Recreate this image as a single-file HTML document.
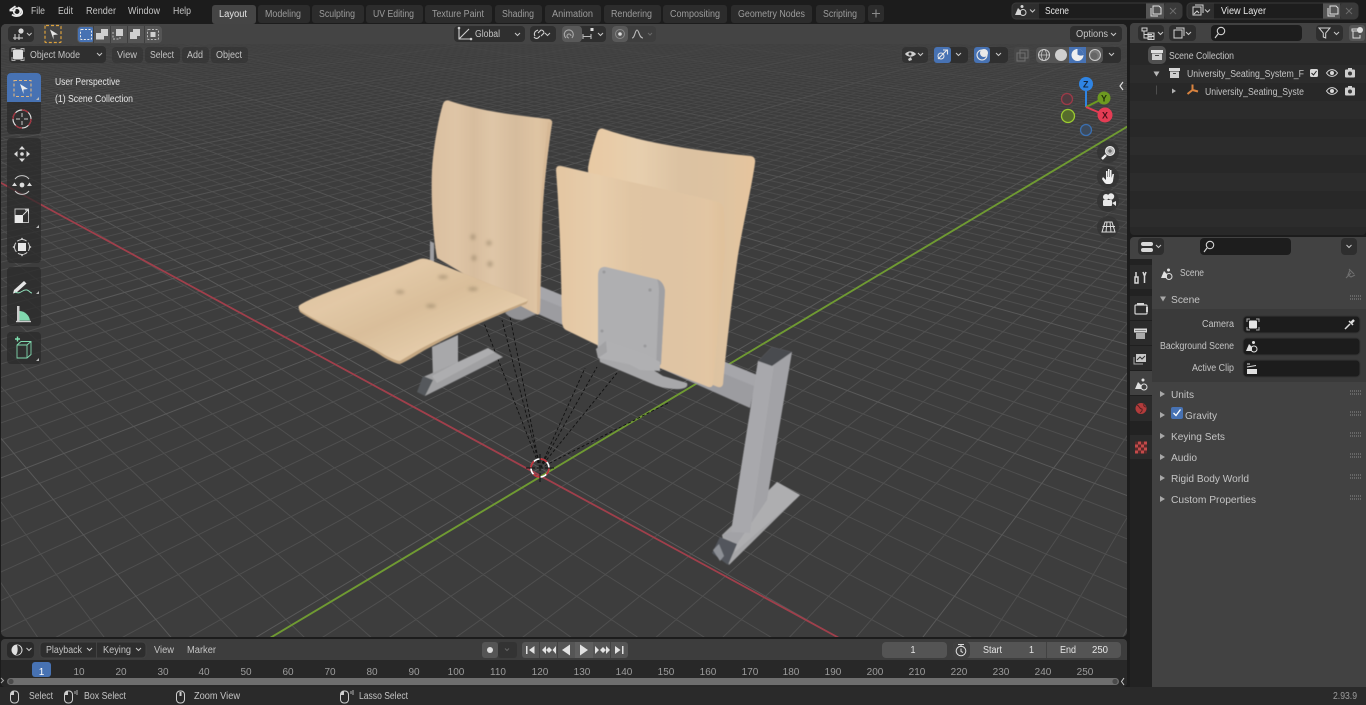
<!DOCTYPE html>
<html><head><meta charset="utf-8"><title>Blender</title>
<style>
html,body{margin:0;padding:0;background:#1d1d1d;width:1366px;height:705px;overflow:hidden}
svg{display:block;overflow:hidden;filter:blur(.28px)}
text{font-family:"Liberation Sans",sans-serif;font-size:10px;fill:#c4c4c4}
.w{fill:#e6e6e6}.d{fill:#9c9c9c}.b{fill:#2a2a2a}
.i{fill:none;stroke:#d8d8d8;stroke-width:1.2}
.f{fill:#d8d8d8}
.a{fill:none;stroke:#c8c8c8;stroke-width:1}
</style></head><body>
<svg xmlns="http://www.w3.org/2000/svg" width="1366" height="705" viewBox="0 0 1366 705" lang="en">
<defs>
<clipPath id="vp"><rect x="1" y="24" width="1126" height="613" rx="5"/></clipPath>
<linearGradient id="fade" x1="0" y1="0" x2="0" y2="1"><stop offset="0" stop-color="#3d3d3d" stop-opacity=".82"/><stop offset=".3" stop-color="#3d3d3d" stop-opacity=".4"/><stop offset="1" stop-color="#3d3d3d" stop-opacity="0"/></linearGradient>
<linearGradient id="wa" x1="0" y1="0" x2="1" y2="0"><stop offset="0" stop-color="#dabfa0"/><stop offset=".2" stop-color="#dfc5a6"/><stop offset=".35" stop-color="#d7bd9e"/><stop offset=".5" stop-color="#dfc6a7"/><stop offset=".7" stop-color="#d6bc9d"/><stop offset=".88" stop-color="#dfc4a3"/><stop offset="1" stop-color="#d8bb98"/></linearGradient>
<linearGradient id="wb" x1="0" y1="0" x2="1" y2="0"><stop offset="0" stop-color="#e3c6a2"/><stop offset=".25" stop-color="#e7cdab"/><stop offset=".45" stop-color="#e0c5a3"/><stop offset=".7" stop-color="#dfc4a3"/><stop offset=".9" stop-color="#e2c6a3"/><stop offset="1" stop-color="#e0c19b"/></linearGradient>
<linearGradient id="wc" x1="0" y1="0" x2="1" y2="0"><stop offset="0" stop-color="#e8c9a3"/><stop offset=".3" stop-color="#e7cfae"/><stop offset=".55" stop-color="#dcc2a2"/><stop offset=".8" stop-color="#dec3a1"/><stop offset="1" stop-color="#e6c59e"/></linearGradient>
<linearGradient id="ws" x1="0" y1="0" x2="1" y2="1"><stop offset="0" stop-color="#dcc09c"/><stop offset=".3" stop-color="#e2c8a6"/><stop offset=".5" stop-color="#d9be9a"/><stop offset=".7" stop-color="#e3caa8"/><stop offset="1" stop-color="#dcbf9a"/></linearGradient>
<filter id="s" x="-5%" y="-5%" width="110%" height="110%"><feGaussianBlur stdDeviation=".5"/></filter>
<filter id="sp" x="-50%" y="-50%" width="200%" height="200%"><feGaussianBlur stdDeviation="1.7"/></filter>
</defs>

<!-- base -->
<rect width="1366" height="705" fill="#1c1c1c"/>

<!-- 3D viewport -->
<g clip-path="url(#vp)">
<rect x="0" y="24" width="1128" height="614" fill="#3d3d3d"/>
<g id="minor" stroke="#4f4f4f" stroke-width="1" fill="none"></g>
<g id="major" stroke="#595959" stroke-width="1" fill="none"></g>
<rect x="0" y="24" width="1128" height="260" fill="url(#fade)"/>
<path d="M-20,171.500L840,638.500" stroke="#a03f4b" stroke-width="1.800" fill="none"/>
<path d="M270,638L1130,125" stroke="#6f9a32" stroke-width="1.900" fill="none"/>

<g stroke="#111" stroke-width=".9" stroke-dasharray="3 2.200" fill="none">
<path d="M540,468L484,323M540,468L502,320M540,468L510,317M540,468L585,368M540,468L597,367M540,468L617,373M540,468L670,402"/>
</g>

<g filter="url(#s)">
<!-- left leg -->
<path d="M432,347L458,335V363L433,378Z" fill="#a8a8aa"/>
<path d="M458,362L488,348L503,357L425,396L423,377Z" fill="#a0a0a2"/>
<path d="M458,362L488,348L495,352L437,383L432,376Z" fill="#adadaf"/>
<path d="M423,376L433,380L425,396L417,392Z" fill="#55585c"/>
<path d="M430,241L434,243V262H430Z" fill="#9e9ea2"/>
<!-- beam -->
<path d="M520,278L757,375L750,408L520,306Z" fill="#9c9ca0"/>
<path d="M520,278L757,375L754,386L520,290Z" fill="#a6a6aa"/>
<path d="M505,313Q512,320 522,320L536,314L520,303Z" fill="#929295"/>
<!-- left back -->
<path d="M443,104Q445,99 450,101C480,111 520,116 549,119Q553,120 552,124C548,150 543,190 542,225L540,311Q539,316 536,314L500,295L437,258C432,230 431,190 432,170C433,150 438,120 443,104Z" fill="url(#wa)"/>
<path d="M552,122C548,150 543,190 542,225L540,311Q539,316 537,314C537,260 540,190 548,122Z" fill="#d6b895"/>
<!-- left seat -->
<path d="M299,306C310,296 380,275 420,259Q425,258 430,260L527,299Q529,301 526,304C490,318 440,340 415,356Q405,362 400,364Q396,364 385,358C360,341 320,326 300,312Q298,308 299,306Z" fill="#c3a681"/>
<path d="M299,306C310,296 380,275 420,259Q425,258 430,260L527,299Q529,301 525,302C490,316 440,337 415,352Q405,358 400,361Q396,361 385,355C360,339 320,324 300,310Q298,308 299,306Z" fill="url(#ws)"/>
<g filter="url(#sp)" fill="#8d7a5f" opacity=".5">
<ellipse cx="473" cy="237" rx="2.600" ry="3"/><ellipse cx="489" cy="243" rx="2.800" ry="2.600"/><ellipse cx="474" cy="258" rx="2.600" ry="3"/><ellipse cx="490" cy="264" rx="2.800" ry="3"/>
<ellipse cx="400" cy="292" rx="4.500" ry="2"/><ellipse cx="443" cy="277" rx="5" ry="2"/><ellipse cx="473" cy="289" rx="5" ry="2"/><ellipse cx="431" cy="306" rx="5" ry="2"/>
</g>
<!-- right rear back -->
<path d="M597,133Q599,127 604,129C650,145 710,152 751,156Q756,157 755,163C752,185 745,215 738,255C733,290 726,350 723,384Q722,388 718,387L700,380L590,220L588,168C590,155 594,143 597,133Z" fill="url(#wc)"/>
<!-- lower bracket -->
<path d="M597,343L640,362L663,376L687,383Q689,388 680,389Q665,390 650,383L600,362Z" fill="#a8a8aa"/>
<!-- right front seat -->
<path d="M556,170Q556,165 561,166C620,180 670,190 718,202Q724,204 724,212L725,250C722,290 716,350 713,384Q712,389 706,386L660,368L597,345L566,330Q562,328 562,320C561,270 560,220 556,170Z" fill="url(#wb)"/>
<!-- plate -->
<path d="M598,276Q598,266 606,267L656,279Q664,282 665,291L661,364L656,370L598,358Z" fill="#afafb1"/>
<path d="M657,279Q664,282 665,291L661,364L656,370L659,292Q659,284 657,279Z" fill="#a0a0a3"/>
<path d="M596,349L606,341L647,355L660,362L660,371L640,370L625,362L598,358Z" fill="#b0b0b2"/>
<path d="M596,349L606,341L607,352L598,358Z" fill="#a2a2a4"/>
<g fill="#98989a"><circle cx="604" cy="272" r="1.500"/><circle cx="650" cy="290" r="1.600"/><circle cx="602" cy="331" r="1.500"/><circle cx="645" cy="346" r="1.500"/></g>
<!-- right leg -->
<path d="M777,482L800,495L729,565L722,535Z" fill="#a6a6a8"/>
<path d="M777,482L800,495L796,499L735,552L730,535Z" fill="#aeaeb0"/>
<path d="M758,361L772,347L792,352L767,500L737,544L722,535L731,532Z" fill="#a2a2a6"/>
<path d="M758,361L774,365L750,533L731,532Z" fill="#a8a8ac"/>
<path d="M758,361L772,347L792,352L772,366Z" fill="#484b50"/>
<path d="M720,537L737,544L728,565L712,553Z" fill="#53575d"/>
<path d="M713,550L719,544L724,556L720,561Z" fill="#8d9096"/>
</g>

<!-- 3D cursor -->
<g fill="none">
<circle cx="540" cy="468" r="9" stroke="#fff" stroke-width="1.600"/>
<circle cx="540" cy="468" r="9" stroke="#c0303a" stroke-width="1.700" stroke-dasharray="7.100 7.100"/>
<path d="M540,454V463M540,473V482M526,468H535M545,468H554" stroke="#111" stroke-width="1"/>
<path d="M537,468H543M540,465V471" stroke="#222" stroke-width="1.400"/>
</g>

<!-- tool header strip -->
<rect x="0" y="24" width="1128" height="20" fill="#454545" opacity=".96"/>
</g>

<!-- viewport header widgets -->
<g fill="#2f2f2f">
<rect x="8" y="26" width="26" height="16" rx="4"/>
<rect x="77" y="26" width="85" height="17" rx="4" fill="#555"/>
<rect x="454" y="26" width="71" height="16" rx="4"/>
<rect x="530" y="26" width="26" height="16" rx="4"/>
<rect x="578" y="26" width="28" height="16" rx="4"/>
<rect x="562" y="26" width="20" height="16" rx="4" fill="#595959"/>
<rect x="612" y="26" width="44" height="16" rx="4" fill="#3e3e3e"/>
<rect x="612" y="26" width="16" height="16" rx="4" fill="#595959"/>
<rect x="1070" y="26" width="52" height="16" rx="4"/>
<rect x="9" y="46" width="97" height="17" rx="4"/>
<rect x="112" y="47" width="31" height="16" rx="4" opacity=".55"/>
<rect x="145" y="47" width="35" height="16" rx="4" opacity=".55"/>
<rect x="182" y="47" width="27" height="16" rx="4" opacity=".55"/>
<rect x="211" y="47" width="37" height="16" rx="4" opacity=".55"/>
<rect x="902" y="47" width="26" height="16" rx="4" opacity=".8"/>
<rect x="934" y="47" width="34" height="16" rx="4"/>
<rect x="974" y="47" width="34" height="16" rx="4"/>
<rect x="1014" y="47" width="16" height="16" rx="3" fill="#474747"/>
<rect x="1036" y="47" width="85" height="16" rx="4"/>
<rect x="1036" y="47" width="67" height="16" rx="4" fill="#555"/>
</g>
<rect x="934" y="47" width="17" height="16" rx="3" fill="#4772b3"/>
<rect x="974" y="47" width="16" height="16" rx="3" fill="#4772b3"/>
<rect x="1069" y="47" width="17" height="16" fill="#4772b3"/>
<rect x="78" y="27" width="16" height="15" rx="3" fill="#4772b3"/>
<path d="M93.500,26V43M110.500,26V43M127.500,26V43M144.500,26V43" fill="none" stroke="#3f3f3f"/>

<!-- header icons -->
<g class="i">
<path d="M13,38H23M15,34V40M19,34V40" stroke-width="1"/>
<circle class="f" cx="21" cy="31" r="2.600" stroke="none"/>
<path d="M27,33l2.300,2.300 2.300,-2.300" class="a"/>
<rect x="45" y="25.500" width="16" height="17" rx="1" stroke="#dca13c" stroke-dasharray="3 2"/>
</g>
<path d="M50,29.500L58,34.500 53.500,35 53.500,39.500Z" fill="#e6e6e6"/>
<g>
<rect x="80.500" y="29.500" width="11" height="10" rx="1" fill="none" stroke="#eaeaea" stroke-dasharray="2 1.500"/>
<path d="M96,39.500V33h5v-4h7v7h-4v3.500Z" fill="#cfcfcf"/>
<path d="M113,32v7h7v-3" fill="none" stroke="#bbb" stroke-dasharray="2 1.500"/><path d="M116,29h7v7h-7Z" fill="#cfcfcf"/>
<path d="M130,32h7v7h-7ZM133,29h7v7h-3v-4h-4Z" fill="#cfcfcf"/>
<rect x="147.500" y="29.500" width="11" height="10" rx="1" fill="none" stroke="#bbb" stroke-dasharray="2 1.500"/><rect x="150.500" y="32" width="5" height="5" fill="#cfcfcf"/>
</g>
<path d="M459,28V39H471M459,39L469,29" fill="none" stroke="#cfcfcf" stroke-width="1.100"/><circle cx="459" cy="28" r="1.300" fill="#cfcfcf"/><circle cx="471" cy="39" r="1.300" fill="#cfcfcf"/>
<path class="a" d="M515,33l2.500,2.500 2.500,-2.500M545,33l2.500,2.500 2.500,-2.500M598,33l2.500,2.500 2.500,-2.500M1111,33l2.500,2.500 2.500,-2.500M97,53l2.500,2.500 2.500,-2.500M918,53l2.500,2.500 2.500,-2.500M956,53l2.500,2.500 2.500,-2.500M996,53l2.500,2.500 2.500,-2.500M1109,53l2.500,2.500 2.500,-2.500"/>
<path d="M648,33l2,2 2,-2" fill="none" stroke="#6a6a6a"/>
<g fill="none" stroke="#d0d0d0" stroke-width="1.100">
<path d="M535,36a3.500,3.500 0 0 1 1,-5l2,-1M540,36l-2,2a3,3 0 0 1 -4,-1M538,33l3,-3a3,3 0 0 1 3,3l-3,3"/>
<path d="M566,38a4.500,4.500 0 1 1 7,-2l-1,2M569,38a2,2 0 1 1 2,-2" stroke="#aaa"/>
<path d="M583,34v5M591,34v5M583,36.500h8" stroke="#bbb"/>
<path d="M632,38c3,0 3,-8 5,-8s2,8 6,8" stroke="#bbb"/>
</g>
<rect x="590.500" y="28" width="3" height="3" fill="#ddd"/>
<circle cx="620" cy="34" r="4.500" fill="none" stroke="#888"/><circle cx="620" cy="34" r="1.800" fill="#ddd"/>
<g>
<rect x="13" y="49.500" width="10" height="10" rx="1.500" fill="#ddd"/><path d="M12,52V48.500H15.500M24,52V48.500H20.500M12,57V60.500H15.500M24,57V60.500H20.500" fill="none" stroke="#aaa"/>
</g>
<!-- visibility icons -->
<path d="M905,54c2,-3 8,-4 11,0c-2,3 -8,4 -11,0Z" fill="#d0d0d0"/><path d="M908,59l3,-2 1,3-3,1Z" fill="#d0d0d0"/><circle cx="910" cy="54" r="1.500" fill="#333"/>
<path d="M938,59L947,50M943,50h4.500v4.500" fill="none" stroke="#e8e8e8" stroke-width="1.100"/><circle cx="941" cy="56" r="3" fill="none" stroke="#e8e8e8"/>
<circle cx="982" cy="55" r="5" fill="none" stroke="#e8e8e8" stroke-width="1.100"/><circle cx="984" cy="53" r="4" fill="#e8e8e8"/>
<rect x="1017" y="53" width="8" height="8" fill="none" stroke="#717171"/><rect x="1020" y="50" width="8" height="8" fill="none" stroke="#717171"/>
<circle cx="1044" cy="55" r="5.500" fill="none" stroke="#ccc"/><ellipse cx="1044" cy="55" rx="2.500" ry="5.500" fill="none" stroke="#ccc" stroke-width=".7"/><path d="M1038.500,55h11" stroke="#ccc" stroke-width=".7"/>
<circle cx="1061" cy="55" r="6" fill="#cfcfcf"/>
<circle cx="1077.500" cy="55" r="6" fill="#eee"/><path d="M1077.500,49a6,6 0 0 1 6,6a6,6 0 0 1 -6,-.5Z" fill="#4772b3"/><path d="M1072,55.500a6,6 0 0 1 5.500,-6.500v5.500Z" fill="#eee"/>
<circle cx="1095" cy="55" r="5.500" fill="#777" stroke="#ccc"/><circle cx="1094" cy="56" r="3.600" fill="#666"/>

<!-- viewport overlay text -->
<text class="w" x="55" y="85" textLength="65" lengthAdjust="spacingAndGlyphs">User Perspective</text>
<text class="w" x="55" y="102" textLength="78" lengthAdjust="spacingAndGlyphs">(1) Scene Collection</text>

<!-- toolbar -->
<g fill="#2a2a2a" fill-opacity=".72">
<rect x="7" y="73" width="34" height="61" rx="4"/>
<rect x="7" y="138" width="34" height="125" rx="4"/>
<rect x="7" y="267" width="34" height="59" rx="4"/>
<rect x="7" y="332" width="34" height="32" rx="4"/>
</g>
<path d="M7,77a4,4 0 0 1 4,-4h26a4,4 0 0 1 4,4v25h-34Z" fill="#4772b3"/>
<rect x="14" y="80.500" width="17" height="16" fill="none" stroke="#e0b680" stroke-dasharray="3 2" stroke-width="1.100"/>
<path d="M20,84L28,89 23.500,89.500V94Z" fill="#eee"/>
<circle cx="22" cy="119" r="9" fill="none" stroke="#ddd" stroke-width="1.200"/><circle cx="22" cy="119" r="9" fill="none" stroke="#a3303c" stroke-width="1.300" stroke-dasharray="7 7"/>
<path d="M22,113V117M22,121V125M16,119H20M24,119H28" stroke="#c8c8c8"/>
<g fill="#dcdcdc"><path d="M22,146l3,3.500h-6ZM22,162l3,-3.500h-6ZM14,154l3.500,-3v6ZM30,154l-3.500,-3v6Z"/><circle cx="22" cy="154" r="1.800"/></g>
<path d="M15,179a9,9 0 0 1 14,0M15,191a9,9 0 0 0 14,0" fill="none" stroke="#ccc" stroke-width="1"/><circle cx="22" cy="185" r="2.400" fill="#dcdcdc"/><path d="M12,186h5l-2.500,-3.500ZM27,186h5l-2.500,-3.500Z" fill="#dcdcdc"/>
<rect x="15" y="209" width="13.500" height="13.500" fill="none" stroke="#bbb"/><rect x="15" y="215" width="8" height="8" fill="#e8e8e8"/><path d="M23,215l5,-5M25,210h3.500v3.500" stroke="#e0e0e0" fill="none"/>
<circle cx="22" cy="247" r="7.500" fill="none" stroke="#ccc" stroke-dasharray="4 2"/><rect x="18" y="243" width="8" height="8" fill="#e8e8e8"/><path d="M12.500,247l2.500,-2v4ZM31.500,247l-2.500,-2v4ZM22,237.500l-2,2.500h4ZM22,256.500l-2,-2.500h4Z" fill="#ccc"/>
<path d="M14,290l10,-9 2.500,2.500 -10,9 -3.500,1Z" fill="#e6e6e6"/><path d="M15,292c6,3 7,-3 12,-2 3,1 3,3 5,3" fill="none" stroke="#8fdcb8" stroke-width="1"/>
<path d="M17,306h2.500v15H17Z" fill="#ccc"/><path d="M19.500,320.500V311a11,11 0 0 1 10.500,9.500Z" fill="#80d8ae"/><path d="M16,321.500H31" stroke="#ccc" stroke-width="1.400"/>
<path d="M17,345l4,-3.500h10v13l-4,3.500h-10ZM17,345h10v13M27,345l4,-3.500" fill="none" stroke="#80d8ae" stroke-width=".9"/><path d="M15,339h5M17.500,336.500v5" stroke="#80e0b0" stroke-width="1.400"/>
<path d="M39,100v-3l-3,3ZM39,228v-3l-3,3ZM39,294v-3l-3,3ZM39,361v-3l-3,3Z" fill="#bbb"/>

<!-- gizmo -->
<g>
<path d="M1086,107V91" stroke="#2f84e3" stroke-width="2"/>
<path d="M1086,107L1104,98" stroke="#6d9a20" stroke-width="2"/>
<path d="M1086,107L1105,115" stroke="#e43c54" stroke-width="2"/>
<circle cx="1067" cy="99" r="5.500" fill="#4e3c40" stroke="#9c3a48" stroke-width="1.300"/>
<circle cx="1068" cy="116" r="6.500" fill="#566b2c" stroke="#9ccc30" stroke-width="1.300"/>
<circle cx="1086" cy="130" r="5.500" fill="#3c4a5c" stroke="#3b6fb0" stroke-width="1.300"/>
<circle cx="1086" cy="84" r="7" fill="#2f84e3"/>
<circle cx="1104" cy="98" r="6.500" fill="#6d9a20"/>
<circle cx="1105" cy="115" r="7.500" fill="#e43c54"/>
<text x="1083" y="87.500" style="font-size:9px;fill:#12263e;font-weight:bold">Z</text>
<text x="1101" y="101.500" style="font-size:9px;fill:#20300a;font-weight:bold">Y</text>
<text x="1102" y="118.500" style="font-size:9px;fill:#4a0e18;font-weight:bold">X</text>
</g>
<g fill="#333" fill-opacity=".8"><circle cx="1108" cy="152" r="11"/><circle cx="1108" cy="177" r="11"/><circle cx="1108" cy="201" r="11"/><circle cx="1108" cy="227" r="11"/></g>
<path d="M1123,82l-3,4 3,4" fill="none" stroke="#ddd" stroke-width="1.200"/>
<circle cx="1110" cy="151" r="4.500" fill="#bbb" stroke="#eee"/><path d="M1106,155l-4,4" stroke="#eee" stroke-width="2.400"/><path d="M1108,151h4M1110,149v4" stroke="#555"/>
<path d="M1103,177l3,3v-9h1.500v6h.5v-8h1.500v8h.5v-7h1.500v8l1,-4h1.500l-1,7c-.5,2 -2,3 -4,3h-2c-2,0 -3,-2 -5,-5Z" fill="#f0f0f0"/>
<circle cx="1106" cy="197" r="3" fill="#e8e8e8"/><circle cx="1111" cy="196.500" r="3.200" fill="#e8e8e8"/><rect x="1103" y="200" width="9" height="6" rx="1" fill="#e8e8e8"/><path d="M1112,203l4,-2v5Z" fill="#e8e8e8"/>
<path d="M1105,222h7l3,10h-13ZM1102.500,226.500h12.500M1107,222l-1,10M1110,222l1,10" fill="none" stroke="#ddd"/>

<!-- top bar -->
<rect x="0" y="0" width="1366" height="23" fill="#1c1c1c"/>
<g fill="none" stroke="#ececec" stroke-width="1.700"><circle cx="17" cy="11.500" r="3.300"/><path d="M10,10l5.500,-3.800M9.500,10.500h6M12,14.500a6,4.600 0 0 0 10,-1 6,5 0 0 0 -4,-6"/></g>
<text x="31" y="14" textLength="14" lengthAdjust="spacingAndGlyphs">File</text>
<text x="58" y="14" textLength="15" lengthAdjust="spacingAndGlyphs">Edit</text>
<text x="86" y="14" textLength="30" lengthAdjust="spacingAndGlyphs">Render</text>
<text x="128" y="14" textLength="32" lengthAdjust="spacingAndGlyphs">Window</text>
<text x="173" y="14" textLength="18" lengthAdjust="spacingAndGlyphs">Help</text>
<g fill="#2c2c2c">
<rect x="258" y="5" width="52" height="18" rx="3"/><rect x="312" y="5" width="52" height="18" rx="3"/><rect x="366" y="5" width="57" height="18" rx="3"/><rect x="425" y="5" width="67" height="18" rx="3"/><rect x="495" y="5" width="47" height="18" rx="3"/><rect x="545" y="5" width="56" height="18" rx="3"/><rect x="604" y="5" width="57" height="18" rx="3"/><rect x="663" y="5" width="64" height="18" rx="3"/><rect x="731" y="5" width="81" height="18" rx="3"/><rect x="816" y="5" width="49" height="18" rx="3"/><rect x="868" y="5" width="16" height="17" rx="3"/>
</g>
<rect x="212" y="5" width="44" height="19" rx="3" fill="#454545"/>
<text class="w" x="219" y="17" textLength="28" lengthAdjust="spacingAndGlyphs">Layout</text>
<g>
<text class="d" x="265" y="17" textLength="36" lengthAdjust="spacingAndGlyphs">Modeling</text>
<text class="d" x="319" y="17" textLength="36" lengthAdjust="spacingAndGlyphs">Sculpting</text>
<text class="d" x="373" y="17" textLength="41" lengthAdjust="spacingAndGlyphs">UV Editing</text>
<text class="d" x="432" y="17" textLength="52" lengthAdjust="spacingAndGlyphs">Texture Paint</text>
<text class="d" x="502" y="17" textLength="32" lengthAdjust="spacingAndGlyphs">Shading</text>
<text class="d" x="552" y="17" textLength="41" lengthAdjust="spacingAndGlyphs">Animation</text>
<text class="d" x="611" y="17" textLength="41" lengthAdjust="spacingAndGlyphs">Rendering</text>
<text class="d" x="670" y="17" textLength="50" lengthAdjust="spacingAndGlyphs">Compositing</text>
<text class="d" x="738" y="17" textLength="67" lengthAdjust="spacingAndGlyphs">Geometry Nodes</text>
<text class="d" x="823" y="17" textLength="34" lengthAdjust="spacingAndGlyphs">Scripting</text>
</g>
<path d="M876,9.500v8M872,13.500h8" stroke="#8c8c8c" stroke-width="1.100"/>
<!-- scene selector -->
<rect x="1012" y="3" width="170" height="16" rx="4" fill="#2e2e2e" stroke="#3a3a3a"/>
<rect x="1039" y="3.500" width="107" height="15" fill="#1d1d1d"/>
<rect x="1146" y="3.500" width="18" height="15" fill="#545454"/><rect x="1164" y="3.500" width="18" height="15" rx="3" fill="#3a3a3a"/>
<rect x="1187" y="3" width="171" height="16" rx="4" fill="#2e2e2e" stroke="#3a3a3a"/>
<rect x="1214" y="3.500" width="109" height="15" fill="#1d1d1d"/>
<rect x="1323" y="3.500" width="17" height="15" fill="#545454"/><rect x="1340" y="3.500" width="18" height="15" rx="3" fill="#3a3a3a"/>
<text class="w" x="1045" y="14" textLength="24" lengthAdjust="spacingAndGlyphs">Scene</text>
<text class="w" x="1221" y="14" textLength="45" lengthAdjust="spacingAndGlyphs">View Layer</text>
<path d="M1015,15l3,-7 3,3v4Z" fill="#d4d4d4"/><circle cx="1023" cy="12.500" r="3" fill="none" stroke="#d4d4d4"/><circle cx="1022" cy="6.500" r="1.500" fill="#d4d4d4"/>
<path class="a" d="M1030,9.500l2.500,2.500 2.500,-2.500M1205,9.500l2.500,2.500 2.500,-2.500"/>
<path d="M1193,7h8v8h-8ZM1195,5h8v8" fill="none" stroke="#d4d4d4"/><path d="M1194,14l3,-3 2,2" fill="none" stroke="#d4d4d4"/>
<path d="M1151,8v8h7M1153,6h6l2,2v6h-8Z" fill="none" stroke="#e0e0e0"/><path d="M1328,8v8h7M1330,6h6l2,2v6h-8Z" fill="none" stroke="#e0e0e0"/>
<path d="M1170,8l6,6M1176,8l-6,6M1346,8l6,6M1352,8l-6,6" stroke="#6c6c6c"/>

<!-- header labels -->
<text x="475" y="37" textLength="25" lengthAdjust="spacingAndGlyphs">Global</text>
<text x="1076" y="37" textLength="32" lengthAdjust="spacingAndGlyphs">Options</text>
<text x="30" y="58" textLength="50" lengthAdjust="spacingAndGlyphs">Object Mode</text>
<text x="117" y="58" textLength="20" lengthAdjust="spacingAndGlyphs">View</text>
<text x="150" y="58" textLength="24" lengthAdjust="spacingAndGlyphs">Select</text>
<text x="187" y="58" textLength="16" lengthAdjust="spacingAndGlyphs">Add</text>
<text x="216" y="58" textLength="26" lengthAdjust="spacingAndGlyphs">Object</text>

<!-- outliner -->
<rect x="1130" y="23" width="236" height="212" rx="4" fill="#282828"/>
<path d="M1130,43V27a4,4 0 0 1 4,-4h232V43Z" fill="#424242"/>
<rect x="1130" y="65" width="236" height="18" fill="#2c2c2c"/>
<rect x="1130" y="101" width="236" height="18" fill="#2c2c2c"/><rect x="1130" y="137" width="236" height="18" fill="#2c2c2c"/><rect x="1130" y="173" width="236" height="18" fill="#2c2c2c"/><rect x="1130" y="209" width="236" height="18" fill="#2c2c2c"/>
<rect x="1138" y="25" width="26" height="16" rx="4" fill="#2e2e2e"/><rect x="1169" y="25" width="27" height="16" rx="4" fill="#2e2e2e"/><rect x="1211" y="25" width="91" height="16" rx="4" fill="#1d1d1d"/><rect x="1316" y="25" width="27" height="16" rx="4" fill="#2e2e2e"/><rect x="1349" y="25" width="16" height="16" rx="3" fill="#555"/>
<path d="M1142,28h5v3h-5ZM1144,31v7h8M1144,34.500h8M1148,33h6v3h-6ZM1148,36.500h6v3h-6Z" fill="none" stroke="#d4d4d4"/>
<path class="a" d="M1158,32l2.500,2.500 2.500,-2.500M1186,32l2.500,2.500 2.500,-2.500M1334,32l2.500,2.500 2.500,-2.500"/>
<path d="M1174,30h8v8h-8ZM1176,28h8v8" fill="none" stroke="#d4d4d4"/>
<circle cx="1221" cy="31" r="3.700" fill="none" stroke="#d4d4d4" stroke-width="1.100"/><path d="M1218,34l-3,4" stroke="#d4d4d4" stroke-width="1.100"/>
<path d="M1319,28h11l-4.300,5v5l-2.400,-1v-4Z" fill="none" stroke="#d4d4d4"/>
<path d="M1352,29h7v2h-7ZM1353,31v7h7v-3" fill="none" stroke="#ddd"/><circle cx="1360" cy="30" r="3" fill="#ddd"/>
<rect x="1148" y="46" width="18" height="18" rx="5" fill="#505050"/>
<rect x="1151" y="50" width="12" height="3" fill="#e0e0e0"/><path d="M1152,53.500h10v6.500h-10Z" fill="#d0d0d0"/><path d="M1155,55.500h4" stroke="#444"/>
<text x="1169" y="59" textLength="65" lengthAdjust="spacingAndGlyphs">Scene Collection</text>
<path d="M1153.500,71.500h6l-3,5Z" fill="#b8b8b8"/>
<rect x="1169" y="68" width="11" height="3" fill="#d8d8d8"/><path d="M1170,71.500h9v6.500h-9Z" fill="#cfcfcf"/><path d="M1173,73.500h3" stroke="#444"/>
<text x="1187" y="77" textLength="117" lengthAdjust="spacingAndGlyphs">University_Seating_System_F</text>
<rect x="1310" y="69" width="8" height="8" rx="1.500" fill="#d8d8d8"/><path d="M1311.500,73l2,2 3,-4" fill="none" stroke="#222"/>
<path d="M1326.500,73c3,-4.500 8,-4.500 11,0c-3,4.500 -8,4.500 -11,0Z" fill="none" stroke="#d8d8d8"/><circle cx="1332" cy="73" r="2" fill="#d8d8d8"/>
<rect x="1345" y="69.500" width="10" height="8" rx="1" fill="#cfcfcf"/><rect x="1348" y="68" width="4" height="2" fill="#cfcfcf"/><circle cx="1350" cy="73.500" r="2" fill="#3a3a3a"/>
<path d="M1156.500,85.500v9" stroke="#4d4d4d"/>
<path d="M1172,88.500v5l4,-2.500Z" fill="#b0b0b0"/>
<path d="M1192.500,84.500v6M1192.500,90l5.500,1.500M1192.500,90l-5,4" stroke="#d9833f" stroke-width="2" fill="none"/>
<text x="1205" y="95" textLength="99" lengthAdjust="spacingAndGlyphs">University_Seating_Syste</text>
<path d="M1326.500,91c3,-4.500 8,-4.500 11,0c-3,4.500 -8,4.500 -11,0Z" fill="none" stroke="#d8d8d8"/><circle cx="1332" cy="91" r="2" fill="#d8d8d8"/>
<rect x="1345" y="87.500" width="10" height="8" rx="1" fill="#cfcfcf"/><rect x="1348" y="86" width="4" height="2" fill="#cfcfcf"/><circle cx="1350" cy="91.500" r="2" fill="#3a3a3a"/>

<!-- properties -->
<rect x="1130" y="237" width="236" height="450" rx="4" fill="#1f1f1f"/>
<path d="M1130,259V241a4,4 0 0 1 4,-4h232V259Z" fill="#424242"/>
<rect x="1152" y="259" width="214" height="428" fill="#424242"/>
<rect x="1130" y="259" width="22" height="428" fill="#222"/>
<rect x="1138" y="238" width="26" height="17" rx="4" fill="#2e2e2e"/><rect x="1200" y="238" width="91" height="17" rx="4" fill="#1d1d1d"/><rect x="1341" y="238" width="16" height="17" rx="4" fill="#2e2e2e"/>
<rect x="1141" y="242" width="12" height="4" rx="2" fill="#d8d8d8"/><rect x="1141" y="248" width="12" height="4" rx="2" fill="#d8d8d8"/>
<path class="a" d="M1156,245l2.500,2.500 2.500,-2.500M1346.500,245l2.500,2.500 2.500,-2.500"/>
<circle cx="1210" cy="245" r="3.700" fill="none" stroke="#d4d4d4" stroke-width="1.100"/><path d="M1207,248l-3,4" stroke="#d4d4d4" stroke-width="1.100"/>
<!-- tabs -->
<rect x="1130" y="265" width="22" height="24" fill="#2b2b2b"/>
<rect x="1130" y="296" width="22" height="125" fill="#2b2b2b"/>
<rect x="1130" y="435" width="22" height="24" fill="#2b2b2b"/>
<path d="M1130,320.500h22M1130,345.500h22M1130,370.500h22M1130,395.500h22" stroke="#1f1f1f"/>
<rect x="1130" y="371" width="22" height="24" fill="#424242"/>
<path d="M1136,272v5M1135,277h3v6h-3ZM1143,272l1.500,4 1.500,-4M1144.500,276v7" stroke="#d8d8d8" fill="none" stroke-width="1.500"/>
<rect x="1135" y="305" width="12" height="9" rx="1" fill="none" stroke="#d4d4d4" stroke-width="1.200"/><rect x="1137" y="303" width="7" height="2" fill="#d4d4d4"/><rect x="1146" y="307" width="2" height="5" fill="#d4d4d4"/>
<path d="M1134,328.500h13v4h-13Z" fill="#d8d8d8"/><path d="M1136,333h9v6h-9Z" fill="#aaa"/><rect x="1135" y="330" width="11" height="1" fill="#888"/>
<path d="M1136,354h10v8h-10Z" fill="#c8c8c8"/><path d="M1134,357v7h9" fill="none" stroke="#aaa"/><path d="M1137,360l3,-3 2,2 3,-3" stroke="#333" fill="none"/>
<path d="M1135,389l3,-7 3,3v4Z" fill="#e0e0e0"/><circle cx="1144" cy="387" r="3" fill="none" stroke="#e0e0e0"/><circle cx="1143" cy="380" r="1.500" fill="#e0e0e0"/>
<circle cx="1141" cy="408.500" r="5.500" fill="#b23b3b"/><path d="M1137,405c3,1 2,4 5,4 1,2 -1,3 -2,4M1144,404c-1,2 1,3 2,3" stroke="#522" fill="none"/>
<rect x="1135" y="441.500" width="12" height="12" fill="#c44a4a"/><g fill="#5a2a2a"><rect x="1135" y="441.500" width="3" height="3"/><rect x="1141" y="441.500" width="3" height="3"/><rect x="1138" y="444.500" width="3" height="3"/><rect x="1144" y="444.500" width="3" height="3"/><rect x="1135" y="447.500" width="3" height="3"/><rect x="1141" y="447.500" width="3" height="3"/><rect x="1138" y="450.500" width="3" height="3"/><rect x="1144" y="450.500" width="3" height="3"/></g>
<!-- panel -->
<path d="M1161,278l3,-7 3,3v4Z" fill="#e0e0e0"/><circle cx="1169" cy="276.500" r="3" fill="none" stroke="#e0e0e0"/><circle cx="1168.500" cy="270" r="1.500" fill="#e0e0e0"/>
<text x="1180" y="276" textLength="24" lengthAdjust="spacingAndGlyphs">Scene</text>
<path d="M1346,278l5,-5M1349,269l5,5M1350,270l-2,5 3,2 4,-2" fill="none" stroke="#6e6e6e" stroke-width="1.100"/>
<rect x="1152" y="309" width="214" height="73" fill="#3a3a3a"/>
<path d="M1160,296.500h6l-3,5Z" fill="#a8a8a8"/>
<text x="1171" y="303" textLength="29" lengthAdjust="spacingAndGlyphs">Scene</text>
<text x="1202" y="327" textLength="32" lengthAdjust="spacingAndGlyphs">Camera</text>
<text x="1160" y="349" textLength="74" lengthAdjust="spacingAndGlyphs">Background Scene</text>
<text x="1192" y="371" textLength="42" lengthAdjust="spacingAndGlyphs">Active Clip</text>
<g fill="#1c1c1c" stroke="#333"><rect x="1243" y="316" width="117" height="17" rx="4"/><rect x="1243" y="338" width="117" height="17" rx="4"/><rect x="1243" y="360" width="117" height="17" rx="4"/></g>
<rect x="1249" y="320.500" width="8" height="8" rx="1" fill="#e4e4e4"/><path d="M1247,322v-3h3M1259,322v-3h-3M1247,327v3h3M1259,327v3h-3" fill="none" stroke="#aaa"/>
<path d="M1345,329l5,-5M1349,321l4,4" stroke="#ddd" fill="none" stroke-width="1.500"/><path d="M1351,323l3,-3" stroke="#ddd" stroke-width="2.400"/>
<path d="M1246,351l3,-7 3,3v4Z" fill="#e0e0e0"/><circle cx="1254" cy="349" r="3" fill="none" stroke="#e0e0e0"/><circle cx="1253.500" cy="342.500" r="1.500" fill="#e0e0e0"/>
<path d="M1247,369h10v5h-10Z" fill="#e0e0e0"/><path d="M1247,367l9,-1.500M1247,364h3" stroke="#ddd" fill="none"/>
<g fill="#a8a8a8">
<path d="M1160,391v6l5,-3Z"/><path d="M1160,412v6l5,-3Z"/><path d="M1160,433v6l5,-3Z"/><path d="M1160,454v6l5,-3Z"/><path d="M1160,475v6l5,-3Z"/><path d="M1160,496v6l5,-3Z"/>
</g>
<rect x="1171" y="407" width="12" height="12" rx="2" fill="#4772b3"/><path d="M1173.500,413l2.500,2.500 4.500,-6" fill="none" stroke="#fff" stroke-width="1.300"/>
<g>
<text x="1171" y="398" textLength="23" lengthAdjust="spacingAndGlyphs">Units</text>
<text x="1185" y="419" textLength="32" lengthAdjust="spacingAndGlyphs">Gravity</text>
<text x="1171" y="440" textLength="54" lengthAdjust="spacingAndGlyphs">Keying Sets</text>
<text x="1171" y="461" textLength="26" lengthAdjust="spacingAndGlyphs">Audio</text>
<text x="1171" y="482" textLength="78" lengthAdjust="spacingAndGlyphs">Rigid Body World</text>
<text x="1171" y="503" textLength="85" lengthAdjust="spacingAndGlyphs">Custom Properties</text>
</g>
<g stroke="#8c8c8c" stroke-width="1.100" stroke-dasharray="1 1" fill="none">
<path d="M1350,296h11M1350,299h11M1350,391h11M1350,394h11M1350,412h11M1350,415h11M1350,433h11M1350,436h11M1350,454h11M1350,457h11M1350,475h11M1350,478h11M1350,496h11M1350,499h11"/>
</g>

<!-- timeline -->
<rect x="1" y="639" width="1126" height="48" rx="4" fill="#282828"/>
<path d="M1,660V643a4,4 0 0 1 4,-4h1118a4,4 0 0 1 4,4V660Z" fill="#3d3d3d"/>
<rect x="7" y="642" width="27" height="16" rx="4" fill="#2a2a2a"/>
<circle cx="17" cy="650" r="5.500" fill="#e0e0e0"/><path d="M17,645a5,5 0 0 1 -1,10c2,-3 2,-6 1,-10Z" fill="#333"/>
<path class="a" d="M26.500,648l2.500,2.500 2.500,-2.500"/>
<rect x="40" y="642" width="106" height="16" rx="4" fill="#2e2e2e" stroke="#424242"/>
<path d="M96.500,642v16" stroke="#424242"/>
<text x="46" y="653" textLength="36" lengthAdjust="spacingAndGlyphs">Playback</text>
<text x="103" y="653" textLength="28" lengthAdjust="spacingAndGlyphs">Keying</text>
<path class="a" d="M87,648l2.500,2.500 2.500,-2.500M136,648l2.500,2.500 2.500,-2.500"/>
<text x="154" y="653" textLength="20" lengthAdjust="spacingAndGlyphs">View</text>
<text x="187" y="653" textLength="29" lengthAdjust="spacingAndGlyphs">Marker</text>
<rect x="482" y="642" width="16" height="16" rx="3" fill="#555"/><rect x="498" y="642" width="19" height="16" rx="3" fill="#333"/><circle cx="490" cy="650" r="3" fill="#ddd"/>
<path d="M505,648.500l2,2 2,-2" fill="none" stroke="#666"/>
<rect x="522" y="642" width="106" height="16" rx="3" fill="#555"/>
<path d="M539.500,642v16M557.500,642v16M575.500,642v16M592.500,642v16M610.500,642v16" stroke="#424242"/>
<rect x="575" y="642" width="18" height="16" fill="#5f5f5f"/>
<g fill="#e2e2e2">
<path d="M526,646h1.500v8H526ZM534.500,646v8l-5.500,-4Z"/>
<path d="M546,646v8l-4,-4ZM546,650l3,-3 3,3 -3,3ZM556,646v8l-3.500,-4Z"/>
<path d="M570,644.500v11l-8,-5.500Z"/>
<path d="M580,644.500v11l8,-5.500Z"/>
<path d="M595,646v8l4,-4ZM600,650l3,-3 3,3 -3,3ZM606,646v8l4,-4Z"/>
<path d="M615,646v8l5.500,-4ZM622,646h1.500v8H622Z"/>
</g>
<rect x="882" y="642" width="65" height="16" rx="4" fill="#545454"/>
<text class="w" x="910.500" y="653" textLength="5" lengthAdjust="spacingAndGlyphs">1</text>
<rect x="953" y="642" width="168" height="16" rx="4" fill="#545454"/>
<rect x="953" y="642" width="17" height="16" rx="4" fill="#3f3f3f"/>
<circle cx="961" cy="651" r="4.800" fill="none" stroke="#ddd"/><path d="M958,644.500h6M961,645v2M961,648.500v3l2,1" stroke="#ddd" fill="none"/>
<path d="M1046.500,642v16" stroke="#424242"/>
<text class="w" x="983" y="653" textLength="19" lengthAdjust="spacingAndGlyphs">Start</text>
<text class="w" x="1029" y="653" textLength="5" lengthAdjust="spacingAndGlyphs">1</text>
<text class="w" x="1060" y="653" textLength="16" lengthAdjust="spacingAndGlyphs">End</text>
<text class="w" x="1092" y="653" textLength="16" lengthAdjust="spacingAndGlyphs">250</text>
<g text-anchor="middle">
<text class="d" x="79" y="675">10</text><text class="d" x="121" y="675">20</text><text class="d" x="163" y="675">30</text><text class="d" x="204" y="675">40</text><text class="d" x="246" y="675">50</text><text class="d" x="288" y="675">60</text><text class="d" x="330" y="675">70</text><text class="d" x="372" y="675">80</text><text class="d" x="414" y="675">90</text><text class="d" x="456" y="675">100</text><text class="d" x="498" y="675">110</text><text class="d" x="540" y="675">120</text><text class="d" x="582" y="675">130</text><text class="d" x="624" y="675">140</text><text class="d" x="666" y="675">150</text><text class="d" x="708" y="675">160</text><text class="d" x="750" y="675">170</text><text class="d" x="791" y="675">180</text><text class="d" x="833" y="675">190</text><text class="d" x="875" y="675">200</text><text class="d" x="917" y="675">210</text><text class="d" x="959" y="675">220</text><text class="d" x="1001" y="675">230</text><text class="d" x="1043" y="675">240</text><text class="d" x="1085" y="675">250</text>
</g>
<rect x="32" y="662" width="19" height="15" rx="3" fill="#4772b3"/>
<text x="41.500" y="675" text-anchor="middle" style="fill:#fff">1</text>
<rect x="7" y="678" width="1112" height="7" rx="3.500" fill="#6e6e6e"/>
<circle cx="11" cy="681.500" r="2.600" fill="#4a4a4a"/><circle cx="1115" cy="681.500" r="2.600" fill="#4a4a4a"/>
<path d="M1,678l2.500,2.500 -2.500,2.500" fill="none" stroke="#aaa"/>
<path d="M1124,678l-2.500,3.500 2.500,3.500" fill="none" stroke="#ccc"/>

<!-- status bar -->
<rect x="0" y="687" width="1366" height="18" fill="#2a2a2a"/>
<g fill="none" stroke="#cfcfcf"><rect x="10.500" y="691" width="8" height="12" rx="3.500"/><rect x="64.500" y="691" width="8" height="12" rx="3.500"/><rect x="176.500" y="691" width="8" height="12" rx="3.500"/><rect x="340.500" y="691" width="8" height="12" rx="3.500"/></g>
<g fill="#cfcfcf"><path d="M11,695v-1.500a3,3 0 0 1 3,-2.500v4Z"/><path d="M65,695v-1.500a3,3 0 0 1 3,-2.500v4Z"/><rect x="179.500" y="692" width="2" height="4"/><path d="M341,695v-1.500a3,3 0 0 1 3,-2.500v4Z"/><path d="M75,691v3M77,690v5M351,691v3M353,690v5" stroke="#cfcfcf" stroke-width=".8"/></g>
<text x="29" y="699" textLength="24" lengthAdjust="spacingAndGlyphs">Select</text>
<text x="84" y="699" textLength="42" lengthAdjust="spacingAndGlyphs">Box Select</text>
<text x="194" y="699" textLength="46" lengthAdjust="spacingAndGlyphs">Zoom View</text>
<text x="359" y="699" textLength="49" lengthAdjust="spacingAndGlyphs">Lasso Select</text>
<text class="d" x="1333" y="699" textLength="24" lengthAdjust="spacingAndGlyphs">2.93.9</text>
</svg>
<script>
(function(){
var O=[540,468],Vx=[-459,-100],Vy=[1493,-100],kx=38,ky=38;
var X0=0,X1=1128,Y0=24,Y1=638;
function P(u,v){var w=1+u/kx+v/ky;return [(O[0]+u*Vx[0]/kx+v*Vy[0]/ky)/w,(O[1]+u*Vx[1]/kx+v*Vy[1]/ky)/w];}
function seg(p,q){
  var t0=0,t1=1,dx=q[0]-p[0],dy=q[1]-p[1];
  var c=[[-dx,p[0]-X0],[dx,X1-p[0]],[-dy,p[1]-Y0],[dy,Y1-p[1]]];
  for(var i=0;i<4;i++){var a=c[i][0],b=c[i][1];
    if(a===0){if(b<0)return '';}
    else{var r=b/a;if(a<0){if(r>t1)return '';if(r>t0)t0=r;}else{if(r<t0)return '';if(r<t1)t1=r;}}
  }
  return 'M'+(p[0]+t0*dx).toFixed(1)+','+(p[1]+t0*dy).toFixed(1)+'L'+(p[0]+t1*dx).toFixed(1)+','+(p[1]+t1*dy).toFixed(1);
}
var a='',b='';
for(var i=-36;i<=700;i++){
  var vmin=-(kx+i)*ky/kx+1.5,d;
  if(vmin<-400)vmin=-400;
  d=seg(P(i,vmin),P(i,1500))+seg(P(vmin,i),P(1500,i));
  if(i%10===0)b+=d;else if(i<=260)a+=d;
}
document.getElementById('minor').innerHTML='<path d="'+a+'"/>';
document.getElementById('major').innerHTML='<path d="'+b+'"/>';
})();
</script>
</body></html>
